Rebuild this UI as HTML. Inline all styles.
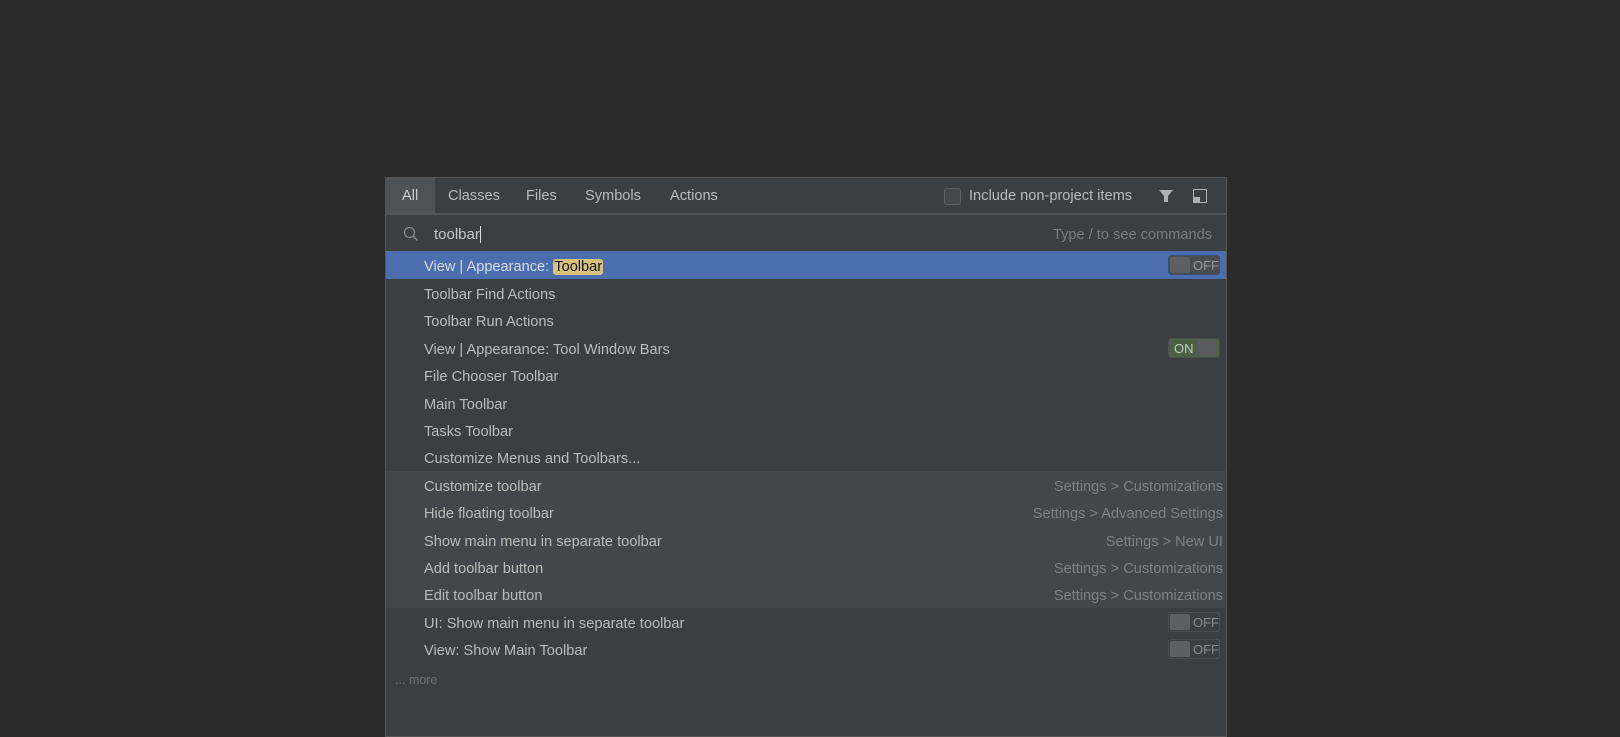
<!DOCTYPE html>
<html><head><style>
*{margin:0;padding:0;box-sizing:border-box}
body{width:1620px;height:724px;background:#2b2b2b;font-family:"Liberation Sans",sans-serif;font-size:14.6px;color:#bbbbbb;position:relative;overflow:hidden}
#p{position:absolute;left:385px;top:177px;width:842px;height:560px;background:#3c3f41;border:1px solid #555}
.tabs{position:absolute;left:0;top:0;width:840px;height:37px;border-bottom:2px solid #515658}
.tab{position:absolute;top:1px;height:35px;line-height:35px}
.sel{position:absolute;left:0;top:0;width:49px;height:35px;background:#4e5254}
.row{position:absolute;left:0;width:840px;height:27.4px;line-height:33px;padding-left:38px}
.g{background:#43464a}
.hint{position:absolute;right:3px;top:0;color:#7f8285}
.tg{position:absolute;right:6px;top:4px;width:52px;height:20px;border:1px solid #4b4d4f;border-radius:3px;background:#3c3f41;font-size:13px;line-height:19px;overflow:hidden}
.tg .k{position:absolute;top:1px;width:20px;height:16px;background:#5d5f61;border-radius:2px}
</style></head><body>
<div id="p">
<div class="tabs">
<div class="sel"></div>
<div class="tab" style="left:16px;color:#ccc">All</div>
<div class="tab" style="left:62px">Classes</div>
<div class="tab" style="left:140px">Files</div>
<div class="tab" style="left:199px">Symbols</div>
<div class="tab" style="left:284px">Actions</div>
<div style="position:absolute;left:558px;top:10px;width:17px;height:17px;border:1px solid #5e6060;border-radius:3px;background:#43494a"></div>
<div class="tab" style="left:583px">Include non-project items</div>
<svg style="position:absolute;left:772px;top:10px" width="16" height="16" viewBox="0 0 16 16"><path d="M1 2H15L10 8V14L6 14V8Z" fill="#afb1b3"/></svg>
<svg style="position:absolute;left:806px;top:10px" width="16" height="16" viewBox="0 0 16 16"><rect x="1.5" y="1.5" width="13" height="13" fill="none" stroke="#afb1b3"/><rect x="2" y="9" width="6" height="5" fill="#afb1b3"/></svg>
</div>
<svg style="position:absolute;left:17px;top:48px" width="16" height="16" viewBox="0 0 16 16"><circle cx="6.5" cy="6.5" r="5" fill="none" stroke="#888" stroke-width="1.3"/><path d="M10 10L14.5 14.5" stroke="#888" stroke-width="1.5"/></svg>
<div style="position:absolute;left:48px;top:47px;line-height:20px;font-size:15px;color:#c5c5c5">toolba<span style="border-right:1px solid #ddd">r</span></div>
<div style="position:absolute;right:14px;top:47px;line-height:20px;color:#7a7d80">Type / to see commands</div>
<div class="row" style="top:73px;height:28px;background:#4b6eaf;color:#d8dde8">View | Appearance: <span style="background:#d9c27c;color:#111;border-radius:3px;padding:0 1px">Toolbar</span><div class="tg" style="background:#4a4d50;border-color:#3d4f70"><div class="k" style="left:1px"></div><span style="position:absolute;left:24px;color:#999">OFF</span></div></div>
<div class="row" style="top:101px">Toolbar Find Actions</div>
<div class="row" style="top:128.4px">Toolbar Run Actions</div>
<div class="row" style="top:155.8px">View | Appearance: Tool Window Bars<div class="tg" style="background:#4a6144"><div class="k" style="right:1px;background:#5a5c5e"></div><span style="position:absolute;left:5px;color:#c8c8c8">ON</span></div></div>
<div class="row" style="top:183.2px">File Chooser Toolbar</div>
<div class="row" style="top:210.6px">Main Toolbar</div>
<div class="row" style="top:238px">Tasks Toolbar</div>
<div class="row" style="top:265.4px">Customize Menus and Toolbars...</div>
<div class="row g" style="top:292.8px">Customize toolbar<span class="hint">Settings &gt; Customizations</span></div>
<div class="row g" style="top:320.2px">Hide floating toolbar<span class="hint">Settings &gt; Advanced Settings</span></div>
<div class="row g" style="top:347.6px">Show main menu in separate toolbar<span class="hint">Settings &gt; New UI</span></div>
<div class="row g" style="top:375px">Add toolbar button<span class="hint">Settings &gt; Customizations</span></div>
<div class="row g" style="top:402.4px">Edit toolbar button<span class="hint">Settings &gt; Customizations</span></div>
<div class="row" style="top:429.8px">UI: Show main menu in separate toolbar<div class="tg"><div class="k" style="left:1px"></div><span style="position:absolute;left:24px;color:#8c8c8c">OFF</span></div></div>
<div class="row" style="top:457.2px">View: Show Main Toolbar<div class="tg"><div class="k" style="left:1px"></div><span style="position:absolute;left:24px;color:#8c8c8c">OFF</span></div></div>
<div style="position:absolute;left:9px;top:495px;font-size:12.5px;color:#6f7275">... more</div>
</div>
</body></html>
